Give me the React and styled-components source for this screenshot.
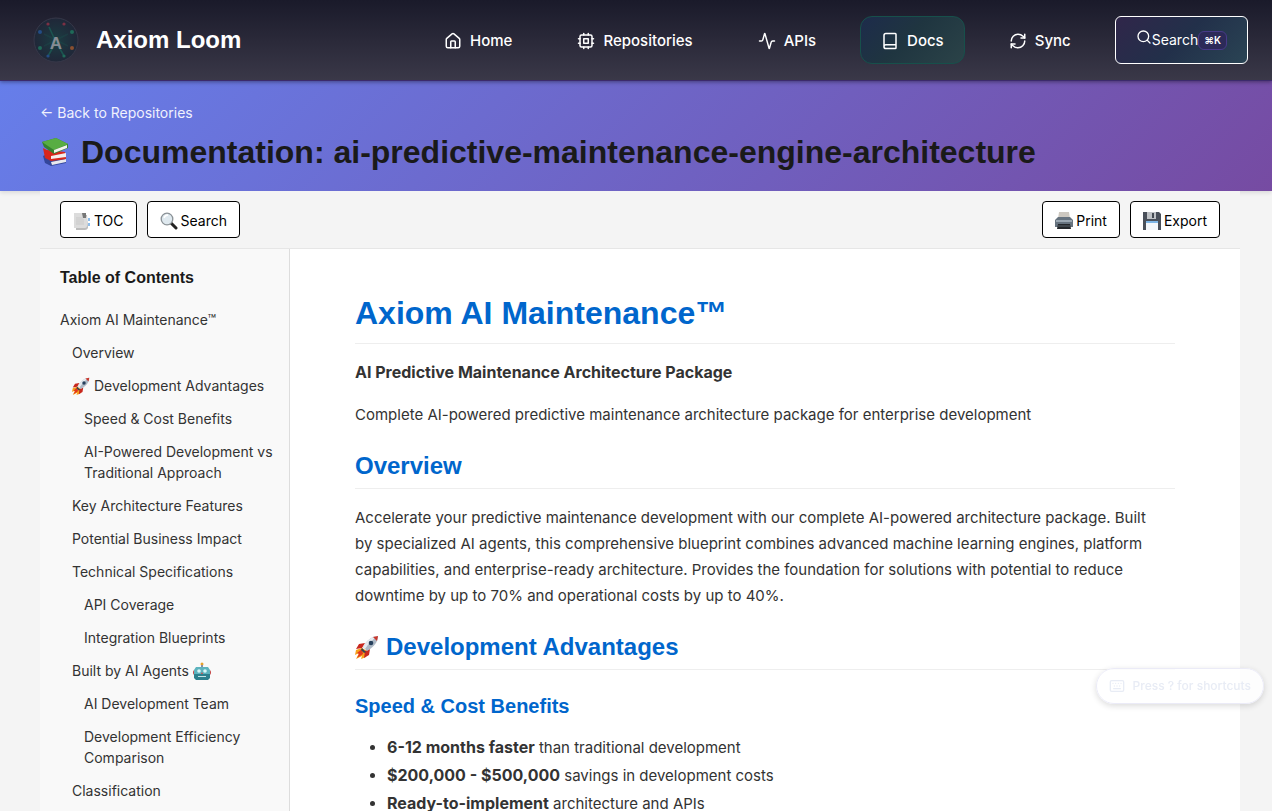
import React from 'react';
import styled, { createGlobalStyle, css } from 'styled-components';
import { House, Activity, Book, RefreshCw, Search, Keyboard } from 'lucide-react';

const sans = "'Inter', 'Liberation Sans', sans-serif";
const display = "'Liberation Sans', Arial, sans-serif";

const GlobalStyle = createGlobalStyle`
  *, *::before, *::after { box-sizing: border-box; }
  body { margin: 0; background: #f4f4f4; color: #1a1a1a; font-family: ${sans}; font-size: 15px; line-height: 26px; }
  h1, h2, h3, p, ul { margin: 0; }
`;

const Shell = styled.div`
  display: flex;
  flex-direction: column;
  height: 100vh;
  overflow: hidden;
`;

const Header = styled.header`
  position: relative;
  display: flex;
  align-items: center;
  justify-content: space-between;
  flex: none;
  padding: 16px 24px 16px 32px;
  background: linear-gradient(180deg, #1a1a2a 0%, #3a3848 100%);
  border-bottom: 1px solid #3c2a6c;
  box-shadow: 0 1px 4px rgba(0, 0, 0, 0.4);
`;

const Brand = styled.a`
  display: flex;
  align-items: center;
  gap: 16px;
  color: #fff;
  font: 700 24px/32px ${display};
  text-decoration: none;
`;

const Nav = styled.nav`
  display: flex;
  gap: 23px;
`;

const pill = css`
  display: flex;
  align-items: center;
  height: 48px;
  padding: 0 20px;
  color: #fff;
`;

const NavLink = styled.a`
  ${pill}
  gap: 8px;
  padding-top: 2px;
  border: 1px solid ${(p) => (p.$active ? '#17504b' : 'transparent')};
  border-radius: 12px;
  background: ${(p) => (p.$active ? 'linear-gradient(135deg, #1d2b4b 0%, #1f3540 45%, #2b4348 100%)' : 'none')};
  font-size: 15px;
  font-weight: 500;
  text-decoration: none;
`;

const SearchButton = styled.button`
  ${pill}
  border: 1px solid #fff;
  border-radius: 6px;
  background: linear-gradient(135deg, #30264a 0%, #22304a 50%, #2a4454 100%);
  font: 400 14px/20px ${sans};
  svg { margin-bottom: 6px; }
`;

const Kbd = styled.kbd`
  padding: 0 5px;
  border: 1px solid #473a88;
  border-radius: 6px;
  background: #2c2a58;
  font: 600 10px/17px ${sans};
`;

const Hero = styled.section`
  flex: none;
  padding: 20px 32px 16px 40px;
  background: linear-gradient(135deg, #667eea 0%, #764ba2 100%);
  box-shadow: 0 2px 4px rgba(0, 0, 0, 0.1);
`;

const BackLink = styled.a`
  display: block;
  color: #f0f1fd;
  font-size: 14px;
  line-height: 24px;
  text-decoration: none;
`;

const PageTitle = styled.h1`
  display: flex;
  align-items: center;
  gap: 10px;
  margin-top: 4px;
  font: 700 32px/46px ${display};
`;

const Viewer = styled.main`
  position: relative;
  display: flex;
  flex: 1;
  flex-direction: column;
  min-height: 0;
  margin: 0 32px 0 40px;
  background: #fff;
`;

const Toolbar = styled.div`
  display: flex;
  gap: 10px;
  padding: 10px 20px;
  border-bottom: 1px solid #e6e6e6;
  background: #f4f4f4;
`;

const ToolButton = styled.button`
  display: flex;
  align-items: center;
  gap: 3px;
  height: 37px;
  padding: 2px 12px 0;
  border: 1px solid #000;
  border-radius: 4px;
  background: #fff;
  color: #000;
  font: 400 14px/21px ${sans};
  margin-left: ${(p) => (p.$push ? 'auto' : '0')};
`;

const Columns = styled.div`
  display: flex;
  flex: 1;
  min-height: 0;
`;

const Sidebar = styled.aside`
  flex: none;
  width: 250px;
  padding: 16px 12px 16px 20px;
  border-right: 1px solid #ddd;
  background: #f9f9f9;
  overflow-y: auto;
  scrollbar-width: none;
`;

const SidebarTitle = styled.h2`
  margin-bottom: 12px;
  font: 700 16px/26px ${display};
`;

const TocList = styled.ul`
  padding: 0;
  list-style: none;
`;

const TocLink = styled.a`
  display: flex;
  align-items: center;
  gap: 4px;
  padding: 6px 0 6px ${(p) => p.$level * 12}px;
  color: #333;
  font-size: 14px;
  line-height: 21px;
  text-decoration: none;
`;

const ArticlePane = styled.div`
  flex: 1;
  overflow-y: auto;
  scrollbar-width: none;
`;

const Article = styled.article`
  max-width: 900px;
  margin: 0 auto;
  padding: 40px;
  color: #333;
  strong { font-size: 16px; line-height: 16px; }
`;

const Title = styled.h1`
  padding-bottom: 6px;
  border-bottom: 1px solid #eee;
  color: #06c;
  font: 700 32px/48px ${display};
`;

const Heading = styled.h2`
  display: flex;
  align-items: center;
  gap: 7px;
  margin-top: 20px;
  padding-bottom: 4px;
  border-bottom: 1px solid #eee;
  color: #06c;
  font: 700 24px/36px ${display};
`;

const Subheading = styled.h3`
  margin-top: 20px;
  color: #06c;
  font: 700 20px/32px ${display};
`;

const Paragraph = styled.p`
  margin-top: 16px;
  padding-right: 12px;
`;

const Bullets = styled.ul`
  margin-top: 12px;
  padding-left: 32px;
  li { padding: 1px 0; }
`;

const Hint = styled.div`
  position: fixed;
  right: 8px;
  bottom: 107px;
  display: flex;
  align-items: center;
  gap: 8px;
  height: 36px;
  padding: 0 12px;
  border: 1px solid #ebebf7;
  border-radius: 18px;
  background: rgba(255, 255, 255, 0.8);
  box-shadow: 0 2px 6px rgba(0, 0, 0, 0.14);
  color: #e8ecf5;
  font-size: 12px;
  font-weight: 500;
`;

const Logo = () => (
  <svg width="48" height="48" viewBox="0 0 48 48" aria-hidden="true">
    <defs>
      <radialGradient id="logoGlow">
        <stop offset="0" stopColor="#1b3c42" />
        <stop offset="1" stopColor="#202738" />
      </radialGradient>
    </defs>
    <circle cx="24" cy="24" r="22" fill="url(#logoGlow)" stroke="#363849" />
    <g stroke="#1c5450" strokeWidth="1.6">
      <path d="M17 11 24 26 32 40M24 26 16 40" />
      <path d="M12 30 36 18M12 18l24 12" opacity=".3" />
    </g>
    <g>
      <circle cx="16" cy="8" r="1.6" fill="#7b3044" />
      <circle cx="32" cy="8" r="1.6" fill="#7b3044" />
      <circle cx="8" cy="16" r="2" fill="#234c84" />
      <circle cx="40" cy="16" r="2" fill="#1f6a58" />
      <circle cx="8" cy="32" r="2" fill="#1f6a58" />
      <circle cx="40" cy="32" r="2" fill="#8a5030" />
      <circle cx="16" cy="40" r="1.6" fill="#234c84" />
      <circle cx="32" cy="40" r="1.6" fill="#1f6a58" />
    </g>
    <text x="24" y="33" textAnchor="middle" fill="#858b94" fontFamily="Liberation Sans" fontWeight="700" fontSize="17">A</text>
  </svg>
);

const Chip = ({ size }) => (
  <svg width={size} height={size} viewBox="0 0 24 24" fill="none" stroke="currentColor" strokeWidth="2" strokeLinecap="round" strokeLinejoin="round" aria-hidden="true">
    <rect x="4" y="4" width="16" height="16" rx="2" />
    <rect x="9" y="9" width="6" height="6" />
    <path d="M9 2v2M15 2v2M9 20v2M15 20v2M20 9h2M20 15h2M2 9h2M2 15h2" />
  </svg>
);

const Books = () => (
  <svg width="31" height="32" viewBox="0 0 31 32" aria-hidden="true">
    <path d="M3 20 7 18l18 4 1 1v4l-15 3-6-3z" fill="#33469b" />
    <path d="m11 26 15-3v3l-14 3z" fill="#e9e9ef" />
    <path d="m3 12 4 2 18 2 1 7-15 2-6-3z" fill="#d9261c" />
    <path d="m11 20 15-3v4l-15 2z" fill="#f4eeee" />
    <path d="m2 6 14-4 12 6v4l-14 6L4 11z" fill="#35812f" />
    <path d="m2 6 14-4 12 6-14 6z" fill="#58ad43" />
    <path d="m14 14 13-5v3l-13 5z" fill="#f3f3ec" />
  </svg>
);

const Rocket = ({ size }) => (
  <svg width={size} height={size} viewBox="0 0 24 24" aria-hidden="true">
    <path d="m7 13-6 2-1 5 4-2-3 6 6-3-1 3 5-2 1-6z" fill="#f6a21b" />
    <path d="m7 14-5 4 2 1-2 4 6-4z" fill="#e3361e" />
    <path d="M10 8 4 9l-3 5 6-1zM15 14l-1 6-5 3 1-7z" fill="#c8281e" />
    <path d="M23 1c-6 0-11 4-15 11l4 4C19 12 23 7 23 1z" fill="#aeb9c5" />
    <path d="M23 1c-6 0-11 4-15 11l2 2C14 8 18 4 23 1z" fill="#e6ebf0" />
    <path d="m23 1-5 1 4 4z" fill="#c9372c" />
    <circle cx="16" cy="8" r="2.3" fill="#26405c" />
    <path d="m7 13 4 4-2 1-3-3z" fill="#39424e" />
  </svg>
);

const Robot = () => (
  <svg width="18" height="18" viewBox="0 0 18 18" aria-hidden="true">
    <circle cx="9" cy="2" r="1.5" fill="#e8a22b" />
    <path d="M8 3h2v3H8z" fill="#8c8fa0" />
    <rect x="0" y="8" width="18" height="5" rx="2" fill="#c64a4a" />
    <path d="M3 5h12l2 3v5H1V8z" fill="#5db3be" />
    <path d="M1 12h16v4l-2 2H3l-2-2z" fill="#2d7f8d" />
    <circle cx="6" cy="9" r="1.8" fill="#d9f5f7" />
    <circle cx="12" cy="9" r="1.8" fill="#d9f5f7" />
    <path d="m9 10 1 2H8z" fill="#d5443e" />
    <path d="M5 14.5h8" stroke="#c4e5e8" />
  </svg>
);

const Pages = () => (
  <svg width="18" height="18" viewBox="0 0 18 18" aria-hidden="true">
    <path d="M3 3h11l1 13q-1 2-3 2H3z" fill="#bcbcbc" />
    <path d="M1 1h8l5 4v9q0 2-2 2H1z" fill="#dcdcdc" />
    <path d="M9 1h4v5h-3z" fill="#777" />
    <path d="M3 6h7M3 8h8M3 10h8M3 12h8" stroke="#c9c9c9" />
    <path d="M15 6h2v3h-2zM15 11h2v3h-2z" fill="#8dbdeb" />
  </svg>
);

const Magnifier = () => (
  <svg width="18" height="18" viewBox="0 0 18 18" aria-hidden="true">
    <path d="m11 11 5 5" stroke="#222" strokeWidth="3" strokeLinecap="round" />
    <circle cx="7" cy="7" r="5.8" fill="#dfe9ef" stroke="#8b9297" strokeWidth="1.3" />
    <path d="M4 6q1-3 4-3" fill="none" stroke="#fff" strokeWidth="1.4" />
  </svg>
);

const Printer = () => (
  <svg width="18" height="18" viewBox="0 0 18 18" aria-hidden="true">
    <path d="M4 0h10l1 7H3z" fill="#cdc8c0" />
    <path d="M3 5h12l3 3v7H0V8z" fill="#66737f" />
    <path d="M1 8h16v2H1z" fill="#9aa7b2" />
    <path d="M3 12h12l1 5H2z" fill="#24282c" />
    <path d="M3 14h12" stroke="#59636b" />
  </svg>
);

const Floppy = () => (
  <svg width="18" height="18" viewBox="0 0 18 18" aria-hidden="true">
    <path d="M0 0h16l2 2v16H0z" fill="#4a505a" />
    <path d="M4 0h9v7H4z" fill="#bfc2c6" />
    <path d="M9 1h2v5H9z" fill="#444a52" />
    <path d="M3 9h12v9H3z" fill="#f3f7fb" />
    <path d="M3 9h12v2H3z" fill="#7db5e6" />
  </svg>
);

const nav = [
  { label: 'Home', Icon: House },
  { label: 'Repositories', Icon: Chip },
  { label: 'APIs', Icon: Activity },
  { label: 'Docs', Icon: Book, active: true },
  { label: 'Sync', Icon: RefreshCw },
];

const toc = [
  [0, 'Axiom AI Maintenance™'],
  [1, 'Overview'],
  [1, 'Development Advantages', 'rocket'],
  [2, 'Speed & Cost Benefits'],
  [2, 'AI-Powered Development vs Traditional Approach'],
  [1, 'Key Architecture Features'],
  [1, 'Potential Business Impact'],
  [1, 'Technical Specifications'],
  [2, 'API Coverage'],
  [2, 'Integration Blueprints'],
  [1, 'Built by AI Agents', 'robot'],
  [2, 'AI Development Team'],
  [2, 'Development Efficiency Comparison'],
  [1, 'Classification'],
];

export default function App() {
  return (
    <Shell>
      <GlobalStyle />
      <Header>
        <Brand href="#home"><Logo />Axiom Loom</Brand>
        <Nav>
          {nav.map(({ label, Icon, active }) => (
            <NavLink key={label} href={`#${label.toLowerCase()}`} $active={active}>
              <Icon size={18} />{label}
            </NavLink>
          ))}
          <SearchButton type="button"><Search size={16} />Search<Kbd>⌘K</Kbd></SearchButton>
        </Nav>
      </Header>
      <Hero>
        <BackLink href="#repositories">← Back to Repositories</BackLink>
        <PageTitle><Books />Documentation: ai-predictive-maintenance-engine-architecture</PageTitle>
      </Hero>
      <Viewer>
        <Toolbar>
          <ToolButton type="button"><Pages />TOC</ToolButton>
          <ToolButton type="button"><Magnifier />Search</ToolButton>
          <ToolButton type="button" $push><Printer />Print</ToolButton>
          <ToolButton type="button"><Floppy />Export</ToolButton>
        </Toolbar>
        <Columns>
          <Sidebar>
            <SidebarTitle>Table of Contents</SidebarTitle>
            <TocList>
              {toc.map(([level, label, icon]) => (
                <li key={label}>
                  <TocLink href="#article" $level={level}>
                    {icon === 'rocket' && <Rocket size={18} />}
                    {label}
                    {icon === 'robot' && <Robot />}
                  </TocLink>
                </li>
              ))}
            </TocList>
          </Sidebar>
          <ArticlePane>
            <Article id="article">
              <Title>Axiom AI Maintenance™</Title>
              <Paragraph><strong>AI Predictive Maintenance Architecture Package</strong></Paragraph>
              <Paragraph>Complete AI-powered predictive maintenance architecture package for enterprise development</Paragraph>
              <Heading>Overview</Heading>
              <Paragraph>
                Accelerate your predictive maintenance development with our complete AI-powered architecture
                package. Built by specialized AI agents, this comprehensive blueprint combines advanced machine
                learning engines, platform capabilities, and enterprise-ready architecture. Provides the
                foundation for solutions with potential to reduce downtime by up to 70% and operational costs by
                up to 40%.
              </Paragraph>
              <Heading><Rocket size={24} />Development Advantages</Heading>
              <Subheading>Speed &amp; Cost Benefits</Subheading>
              <Bullets>
                <li><strong>6-12 months faster</strong> than traditional development</li>
                <li><strong>$200,000 - $500,000</strong> savings in development costs</li>
                <li><strong>Ready-to-implement</strong> architecture and APIs</li>
              </Bullets>
            </Article>
          </ArticlePane>
        </Columns>
      </Viewer>
      <Hint><Keyboard size={16} />Press ? for shortcuts</Hint>
    </Shell>
  );
}
